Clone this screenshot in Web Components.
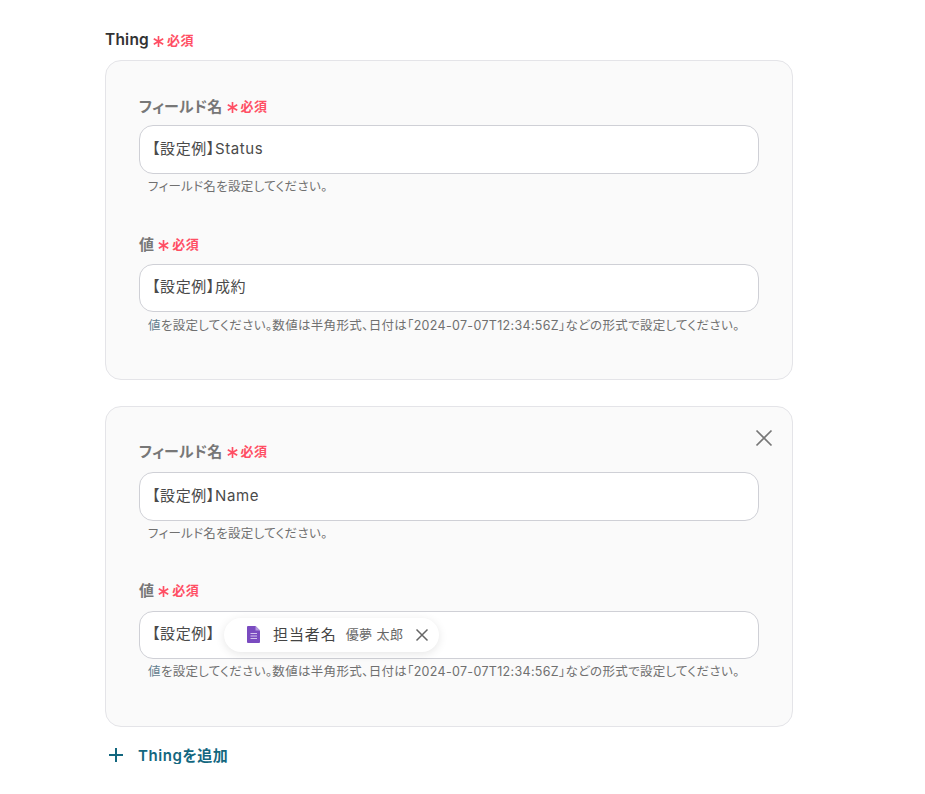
<!DOCTYPE html>
<html lang="ja"><head><meta charset="utf-8"><style>
html,body{margin:0;background:#fff}
body{font-family:Inter,"Noto Sans CJK JP",sans-serif;color:#333;font-feature-settings:"palt"}
</style></head><body>
<template id="req-tpl"><style>
:host{display:flex;align-items:center;height:20px}
.t{font-weight:600;font-size:var(--fs,15px);color:var(--c,#777);letter-spacing:.2px}
svg{margin-left:4px;width:11px;height:11px;margin-top:4px}
.r{color:#ff4f64;font-size:13px;font-weight:600;margin-left:3px;letter-spacing:.5px}
</style><span class="t"><slot></slot></span><svg viewBox="0 0 10 10"><path d="M5 0v10M.7 2.5l8.6 5M9.3 2.5l-8.6 5" stroke="#ff4f64" stroke-width="1.5" fill="none"/></svg><span class="r">必須</span></template>

<template id="field-tpl"><style>
:host{display:block}
.box{box-sizing:border-box;height:var(--h,48px);margin-top:var(--g,10px);border:1px solid #cfd0d6;border-radius:14px;background:#fff;display:flex;align-items:center;padding:0 6px 5px 12px;font-size:15px;color:#4a4a4a;letter-spacing:.6px}
.hint{font-size:12.5px;color:#707070;margin:var(--hm,4px) 0 0 9px;height:18px;line-height:18px;letter-spacing:.32px;white-space:nowrap}
</style><x-req><slot name="label"></slot></x-req><div class="box"><slot name="value"></slot></div><div class="hint"><slot name="hint"></slot></div></template>

<template id="card-tpl"><style>
:host{display:block;position:relative;box-sizing:border-box;border:1px solid #e4e4e8;border-radius:16px;background:#fafafa;padding:var(--pt,34px) 33px 0}
::slotted(x-field){margin-bottom:var(--mb,37px)}
</style><slot></slot><slot name="close"></slot></template>

<template id="chip-tpl"><style>
:host{display:inline-flex;align-items:center;height:34px;margin:5px 0 0 9px;padding:0 10.5px 0 22.5px;border-radius:17px;background:#fff;box-shadow:0 2px 10px rgba(0,0,0,.1);color:#444;letter-spacing:0}
.i{width:13px;height:17px;display:block;margin-bottom:1px}
.n{margin-left:13.5px;font-size:15px;padding-bottom:4px;letter-spacing:.9px}
.v{margin-left:9px;font-size:13px;color:#666;padding-bottom:3px;letter-spacing:.4px}
.c{margin-left:11.5px;width:14px;height:14px;display:block;margin-bottom:1px}
</style><svg class="i" viewBox="0 0 13 17"><path d="M1 0h7.5L13 4.5V16a1 1 0 0 1-1 1H1a1 1 0 0 1-1-1V1a1 1 0 0 1 1-1z" fill="#7a4bc0"/><path d="M8.5 0L13 4.5H8.5z" fill="#b49ade"/><path d="M3.5 7.5h6.5M3.5 10h6.5M3.5 12.5h6.5" stroke="#d4c4ee" stroke-width="1"/></svg><span class="n"><slot name="name"></slot></span><span class="v"><slot name="val"></slot></span><svg class="c" viewBox="0 0 14 14"><path d="M1.5 1.5l11 11M12.5 1.5l-11 11" stroke="#666" stroke-width="1.5" fill="none"/></svg></template>

<template id="add-tpl"><style>
:host{display:flex;align-items:center;height:20px;color:#13677f;font-weight:600;font-size:15px;letter-spacing:.55px}
svg{width:16px;height:16px;margin:1px 14px 0 3px}
</style><svg viewBox="0 0 16 16"><path d="M8 1v14M1 8h14" stroke="#13677f" stroke-width="2" fill="none"/></svg><slot></slot></template>

<template id="app-tpl"><style>
:host{display:block;width:688px;margin-left:105px;padding-top:29px}
.cards{display:flex;flex-direction:column;gap:26px;margin-top:11px}
x-add{margin-top:17px}
x-req{--c:#333;--fs:15.5px}
</style><x-req>Thing</x-req><div class="cards"><slot></slot></div><x-add>Thingを追加</x-add></template>

<x-app>
<x-card style="height:320px">
 <x-field style="--h:49px"><span slot="label">フィールド名</span><span slot="value">【設定例】Status</span><span slot="hint">フィールド名を設定してください。</span></x-field>
 <x-field style="--g:11px;--hm:5px"><span slot="label">値</span><span slot="value">【設定例】成約</span><span slot="hint"><span style="color:#64808f">値</span>を設定してください。数値は半角形式、日付は「2024-07-07T12:34:56Z」などの形式で設定してください。</span></x-field>
</x-card>
<x-card style="height:321px;--mb:36px;--pt:33px">
 <svg slot="close" style="position:absolute;right:19px;top:22px;width:18px;height:18px" viewBox="0 0 18 18"><path d="M1.5 1.5l15 15M16.5 1.5l-15 15" stroke="#777" stroke-width="1.7" fill="none"/></svg>
 <x-field style="--h:49px;--g:12px"><span slot="label">フィールド名</span><span slot="value">【設定例】Name</span><span slot="hint">フィールド名を設定してください。</span></x-field>
 <x-field style="--g:12px"><span slot="label">値</span><span slot="value" style="display:flex;align-items:center">【設定例】<x-chip><span slot="name">担当者名</span><span slot="val">優夢 太郎</span></x-chip></span><span slot="hint"><span style="color:#64808f">値</span>を設定してください。数値は半角形式、日付は「2024-07-07T12:34:56Z」などの形式で設定してください。</span></x-field>
</x-card>
</x-app>
<script>
for(const [n,id] of [['x-req','req-tpl'],['x-field','field-tpl'],['x-card','card-tpl'],['x-chip','chip-tpl'],['x-add','add-tpl'],['x-app','app-tpl']]){
 customElements.define(n,class extends HTMLElement{constructor(){super();this.attachShadow({mode:'open'}).append(document.getElementById(id).content.cloneNode(true))}});
}
</script>
</body></html>
